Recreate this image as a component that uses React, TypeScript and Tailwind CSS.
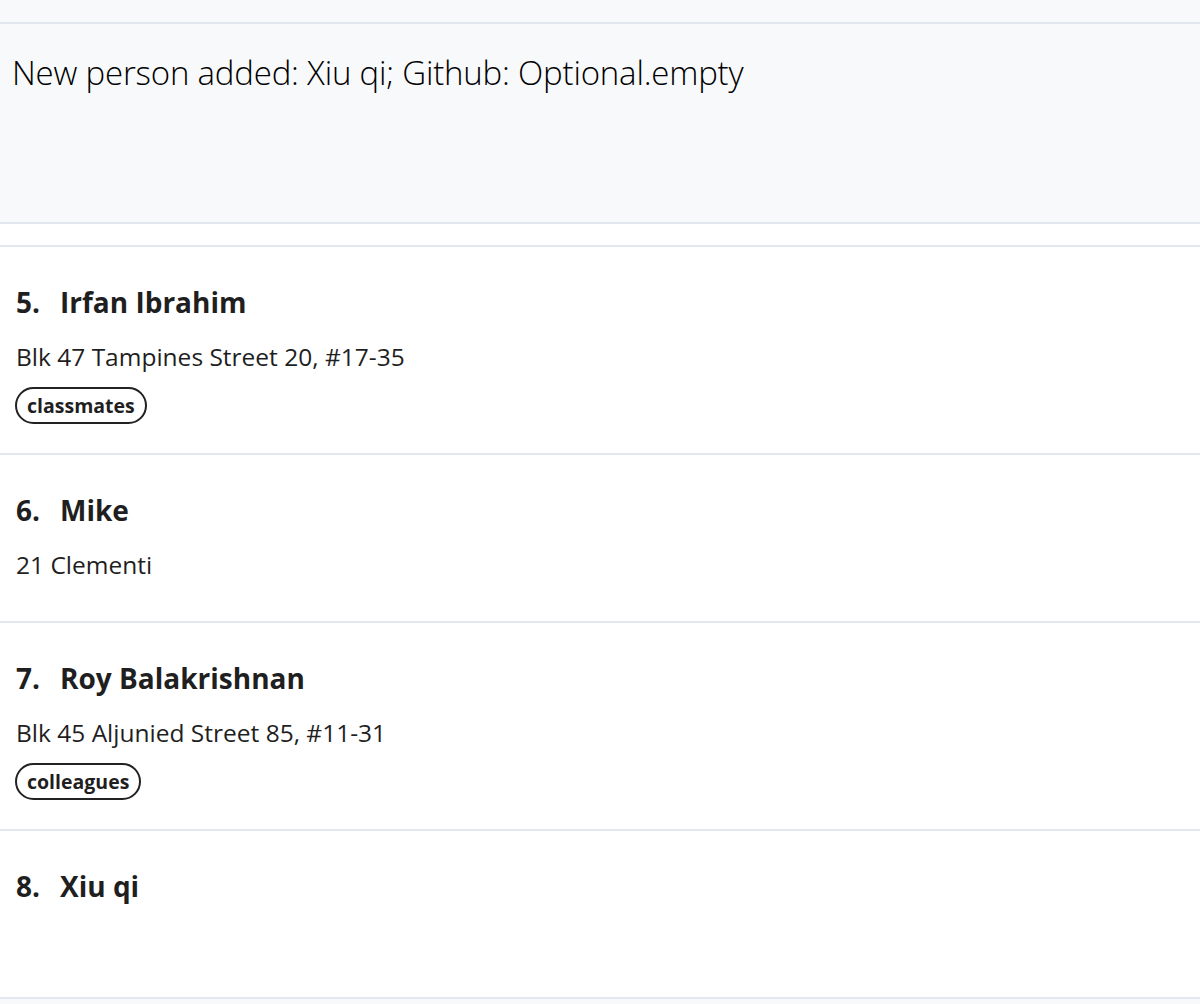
import React from "react";

type Person = { idx: number; name: string; address?: string; tags?: string[] };

const people: Person[] = [
  { idx: 5, name: "Irfan Ibrahim", address: "Blk 47 Tampines Street 20, #17-35", tags: ["classmates"] },
  { idx: 6, name: "Mike", address: "21 Clementi" },
  { idx: 7, name: "Roy Balakrishnan", address: "Blk 45 Aljunied Street 85, #11-31", tags: ["colleagues"] },
  { idx: 8, name: "Xiu qi" },
];

function Card({ p }: { p: Person }) {
  return (
    <div className="bg-white border-b-2 border-[#e3e7f0] min-h-[168px] pt-[35px] pb-[29px] px-4 flex flex-col">
      <div className="h-[40px] flex items-center text-[28px] font-bold text-[#1f1f1f] leading-none">
        <span className="w-[44px]">{p.idx}.</span>
        <span>{p.name}</span>
      </div>
      {p.address && (
        <div className="mt-[20px] h-[30px] flex items-center text-[24.5px] text-[#1f1f1f] leading-none">
          {p.address}
        </div>
      )}
      {p.tags && (
        <div className="mt-[15px] flex gap-2">
          {p.tags.map((t) => (
            <span
              key={t}
              className="h-[37px] px-[10px] flex items-center rounded-full border-2 border-[#222] text-[19.5px] font-bold text-[#1f1f1f] leading-none -ml-[1px]"
            >
              {t}
            </span>
          ))}
        </div>
      )}
    </div>
  );
}

export default function App() {
  return (
    <div
      className="w-[1200px] h-[1004px] bg-[#f8f9fb] overflow-hidden"
      style={{ fontFamily: '"Open Sans", "Noto Sans", sans-serif' }}
    >
      <div className="h-[22px] border-b-2 border-[#e2e7ef] box-content" />
      <div className="h-[200px] border-b-2 border-[#e2e7ef] pl-[12px] pt-[32px]">
        <div className="text-[33px] font-light text-black leading-none tracking-[-0.2px]">
          New person added: Xiu qi; Github: Optional.empty
        </div>
      </div>
      <div className="h-[21px] bg-white border-b-2 border-[#e3e7f0] box-content" />
      {people.map((p) => (
        <Card key={p.idx} p={p} />
      ))}
    </div>
  );
}
